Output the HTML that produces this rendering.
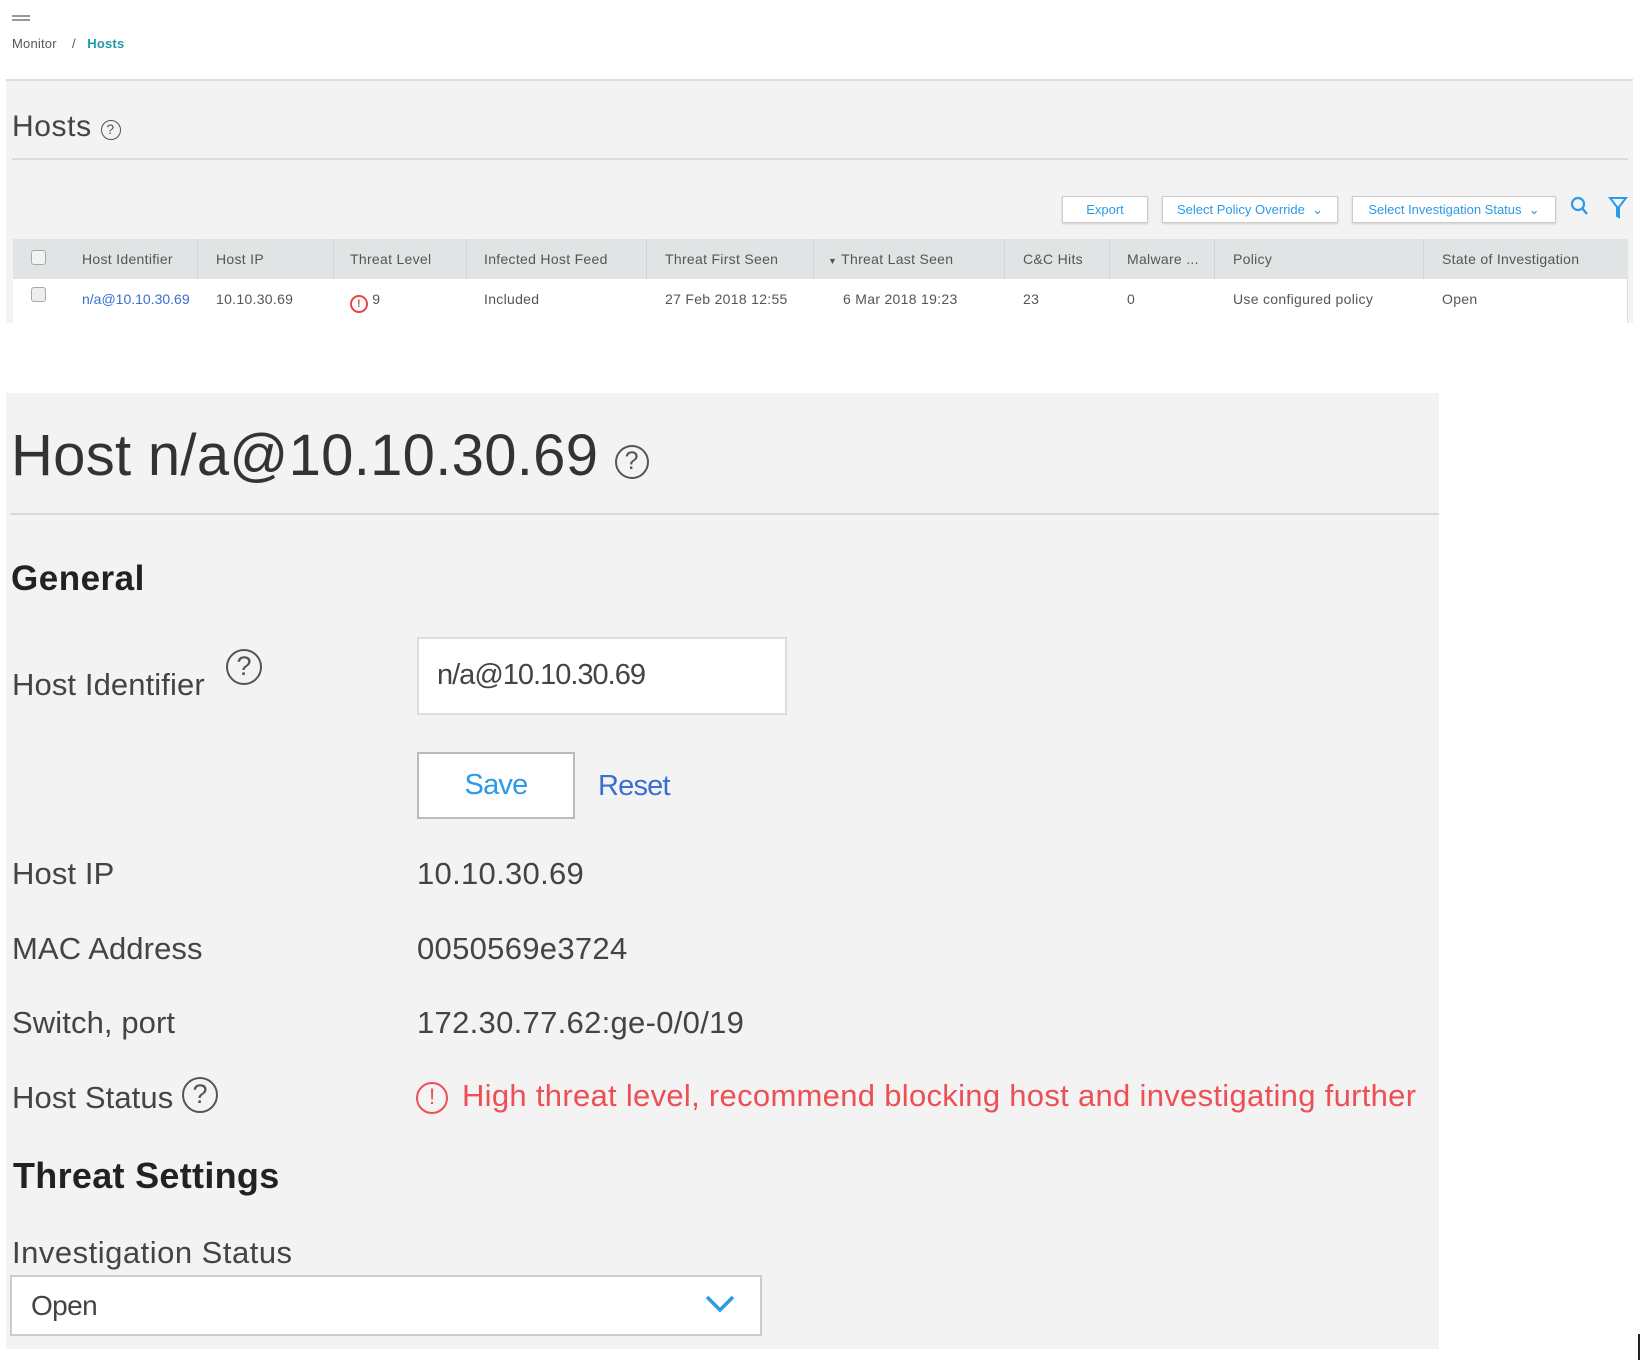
<!DOCTYPE html>
<html><head><meta charset="utf-8"><style>
*{margin:0;padding:0;box-sizing:border-box}
body{width:1644px;height:1360px;background:#fff;font-family:"Liberation Sans",Arial,sans-serif;position:relative;overflow:hidden;color:#333}
.a{position:absolute;white-space:nowrap}
.th{position:absolute;top:0;height:40px;line-height:40px;font-size:14px;color:#555;letter-spacing:.3px}
.td{position:absolute;top:0;height:41px;line-height:41px;font-size:14px;color:#555;letter-spacing:.3px}
.sep{position:absolute;top:0;width:1px;height:40px;background:#cfd4d4}
.btn{position:absolute;top:196px;height:27px;background:#fff;border:1px solid #ccc;box-shadow:0 1px 2px rgba(0,0,0,.15);color:#2a9be8;font-size:13px;line-height:25px;letter-spacing:0;text-align:center}
.lbl{position:absolute;left:12px;font-size:31px;color:#444;letter-spacing:.1px}
.val{position:absolute;left:417px;font-size:31px;color:#444;letter-spacing:.3px}
.q{display:inline-block;border:2px solid #555;border-radius:50%;text-align:center;color:#555;font-weight:normal}
</style></head><body>
<div class="a" style="left:12px;top:15px;width:18px;height:2px;background:#999"></div>
<div class="a" style="left:12px;top:19px;width:18px;height:2px;background:#999"></div>
<div class="a" style="left:12px;top:36px;font-size:13px;color:#555;letter-spacing:.2px">Monitor&nbsp;&nbsp;&nbsp; / &nbsp;&nbsp;<span style="color:#1f9aa8;font-weight:bold">Hosts</span></div>
<div class="a" style="left:6px;top:79px;width:1627px;height:244px;background:#f3f3f3;border-top:2px solid #ddd"></div>
<div class="a" style="left:12px;top:110px;font-size:30px;color:#444;letter-spacing:.6px">Hosts <span class="q" style="width:20px;height:20px;font-size:14px;line-height:16px;border-width:1.5px;vertical-align:2px">?</span></div>
<div class="a" style="left:12px;top:158px;width:1616px;height:2px;background:#ddd"></div>
<div class="btn" style="left:1062px;width:86px">Export</div>
<div class="btn" style="left:1162px;width:176px">Select Policy Override &nbsp;⌄</div>
<div class="btn" style="left:1352px;width:204px">Select Investigation Status &nbsp;⌄</div>
<svg class="a" style="left:1570px;top:196px" width="20" height="22" viewBox="0 0 20 22"><circle cx="8" cy="8" r="6" fill="none" stroke="#2a9be8" stroke-width="2.2"/><line x1="12" y1="12" x2="17" y2="18" stroke="#2a9be8" stroke-width="2.5"/></svg>
<svg class="a" style="left:1608px;top:196px" width="20" height="24" viewBox="0 0 20 24"><path d="M2 2H18L11 11V21L9 20V11Z" fill="none" stroke="#2a9be8" stroke-width="2"/></svg>
<div class="a" style="left:13px;top:239px;width:1615px;height:40px;background:#e1e4e4">
 <div class="a" style="left:18px;top:11px;width:15px;height:15px;border:1px solid #aaa;border-radius:3px;background:#f3f3f3"></div>
 <div class="th" style="left:69px">Host Identifier</div><div class="sep" style="left:184px"></div>
 <div class="th" style="left:203px">Host IP</div><div class="sep" style="left:320px"></div>
 <div class="th" style="left:337px">Threat Level</div><div class="sep" style="left:453px"></div>
 <div class="th" style="left:471px">Infected Host Feed</div><div class="sep" style="left:633px"></div>
 <div class="th" style="left:652px">Threat First Seen</div><div class="sep" style="left:800px"></div>
 <div class="th" style="left:815px"><span style="font-size:9px">▼</span> Threat Last Seen</div><div class="sep" style="left:991px"></div>
 <div class="th" style="left:1010px">C&amp;C Hits</div><div class="sep" style="left:1096px"></div>
 <div class="th" style="left:1114px">Malware ...</div><div class="sep" style="left:1201px"></div>
 <div class="th" style="left:1220px">Policy</div><div class="sep" style="left:1410px"></div>
 <div class="th" style="left:1429px">State of Investigation</div>
</div>
<div class="a" style="left:13px;top:279px;width:1615px;height:44px;background:#fff;border-right:1px solid #ddd">
 <div class="a" style="left:18px;top:8px;width:15px;height:15px;border:1px solid #aaa;border-radius:3px;background:#eee"></div>
 <div class="td" style="left:69px;color:#3a6fd0;letter-spacing:0">n/a@10.10.30.69</div>
 <div class="td" style="left:203px">10.10.30.69</div>
 <div class="td" style="left:337px"><span style="display:inline-block;width:18px;height:18px;border:2px solid #e84545;border-radius:50%;color:#e84545;font-size:11px;line-height:14px;text-align:center;font-weight:bold;vertical-align:-3px">!</span> 9</div>
 <div class="td" style="left:471px">Included</div>
 <div class="td" style="left:652px">27 Feb 2018 12:55</div>
 <div class="td" style="left:830px">6 Mar 2018 19:23</div>
 <div class="td" style="left:1010px">23</div>
 <div class="td" style="left:1114px">0</div>
 <div class="td" style="left:1220px">Use configured policy</div>
 <div class="td" style="left:1429px">Open</div>
</div>
<div class="a" style="left:6px;top:393px;width:1433px;height:956px;background:#f3f3f3"></div>
<div class="a" style="left:11px;top:422px;font-size:58px;color:#333;letter-spacing:.3px">Host n/a@10.10.30.69 <span class="q" style="width:34px;height:34px;font-size:25px;line-height:29px;border-width:2.5px;vertical-align:6px">?</span></div>
<div class="a" style="left:10px;top:513px;width:1429px;height:2px;background:#d8d8d8"></div>
<div class="a" style="left:11px;top:559px;font-size:35px;font-weight:bold;color:#222;letter-spacing:.5px">General</div>
<div class="lbl" style="top:667px">Host Identifier</div>
<div class="a q" style="left:226px;top:649px;width:36px;height:36px;font-size:27px;line-height:31px">?</div>
<div class="a" style="left:417px;top:637px;width:370px;height:78px;background:#fff;border:2px solid #ddd"></div>
<div class="a" style="left:437px;top:659px;font-size:29px;color:#444;letter-spacing:-1px">n/a@10.10.30.69</div>
<div class="a" style="left:417px;top:752px;width:158px;height:67px;background:#fff;border:2px solid #bbb;color:#2a9be8;font-size:29px;line-height:63px;text-align:center;letter-spacing:-.8px">Save</div>
<div class="a" style="left:598px;top:770px;font-size:29px;color:#3a6fd0;letter-spacing:-.8px">Reset</div>
<div class="lbl" style="top:856px">Host IP</div><div class="val" style="top:856px">10.10.30.69</div>
<div class="lbl" style="top:931px">MAC Address</div><div class="val" style="top:931px">0050569e3724</div>
<div class="lbl" style="top:1005px">Switch, port</div><div class="val" style="top:1005px">172.30.77.62:ge-0/0/19</div>
<div class="lbl" style="top:1080px">Host Status</div>
<div class="a q" style="left:182px;top:1077px;width:36px;height:36px;font-size:27px;line-height:31px">?</div>
<div class="a" style="left:416px;top:1082px;width:32px;height:32px;border:2.5px solid #ee4f55;border-radius:50%;color:#ee4f55;font-size:22px;line-height:26px;text-align:center">!</div>
<div class="a" style="left:462px;top:1078px;font-size:31px;color:#ee4f55;letter-spacing:.3px">High threat level, recommend blocking host and investigating further</div>
<div class="a" style="left:13px;top:1155px;font-size:36px;font-weight:bold;color:#222;letter-spacing:.3px">Threat Settings</div>
<div class="lbl" style="top:1235px;letter-spacing:.5px">Investigation Status</div>
<div class="a" style="left:10px;top:1275px;width:752px;height:61px;background:#fff;border:2px solid #ccc"></div>
<div class="a" style="left:31px;top:1290px;font-size:28px;color:#444;letter-spacing:-.6px">Open</div>
<svg class="a" style="left:704px;top:1294px" width="32" height="20" viewBox="0 0 32 20"><path d="M3 3L16 16L29 3" fill="none" stroke="#2a9be8" stroke-width="3.5"/></svg>
<div class="a" style="left:1638px;top:1334px;width:2px;height:26px;background:#222"></div>
</body></html>
